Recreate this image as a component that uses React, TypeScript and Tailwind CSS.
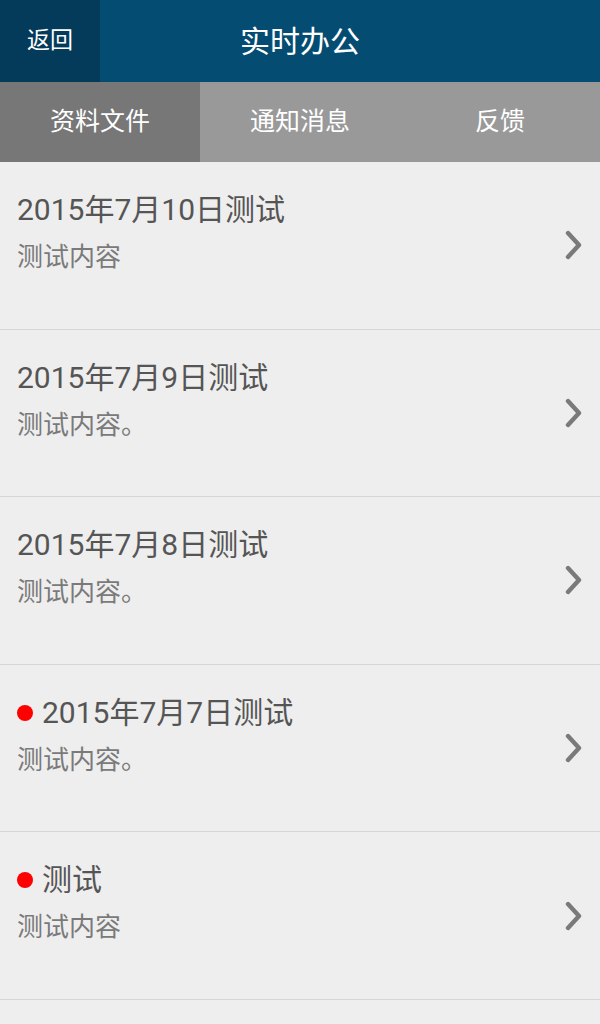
import { ReactNode } from 'react'

interface Notice {
  title: string
  body: string
  unread?: boolean
}

const notices: Notice[] = [
  { title: '2015年7月10日测试', body: '测试内容' },
  { title: '2015年7月9日测试', body: '测试内容。' },
  { title: '2015年7月8日测试', body: '测试内容。' },
  { title: '2015年7月7日测试', body: '测试内容。', unread: true },
  { title: '测试', body: '测试内容', unread: true },
]

const tabs = ['资料文件', '通知消息', '反馈']

function Chevron() {
  return (
    <svg width="20" height="30" viewBox="0 0 20 30" className="shrink-0">
      <path d="M4 3 L15 15 L4 27" fill="none" stroke="#7a7a7a" strokeWidth="4.4" strokeLinecap="round" strokeLinejoin="round" />
    </svg>
  )
}

function Row({ notice }: { notice: Notice }): ReactNode {
  return (
    <div className="h-[167.6px] border-b border-[#d6d6d6] flex items-center pl-[17px] pr-[16px]">
      <div className="flex-1 flex flex-col self-stretch pt-[31px]">
        <div className="flex items-center h-[34px] text-[30px] leading-[34px] text-[#555555]">
          {notice.unread && <span className="w-4 h-4 rounded-full bg-[#ff0000] mr-[9px] shrink-0" />}
          <span>{notice.title}</span>
        </div>
        <div className="mt-[15px] text-[26px] leading-[30px] text-[#7a7a7a]">{notice.body}</div>
      </div>
      <Chevron />
    </div>
  )
}

export default function App() {
  return (
    <div
      className="w-[600px] h-[1024px] overflow-hidden bg-[#eeeeee]"
      style={{ fontFamily: 'Roboto, "Noto Sans CJK SC", sans-serif' }}
    >
      {/* Title bar */}
      <div className="relative h-[82px] bg-[#054c72] flex items-center justify-center">
        <div className="absolute left-0 top-0 h-full w-[100px] bg-[#043a5a] flex items-center justify-center text-white text-[23px]">
          返回
        </div>
        <h1 className="text-white text-[30px] font-normal m-0">实时办公</h1>
      </div>

      {/* Tabs */}
      <div className="flex h-[80px] bg-[#999999]">
        {tabs.map((tab, i) => (
          <div
            key={tab}
            className={`flex-1 flex items-center justify-center text-white text-[25px] ${i === 0 ? 'bg-[#777777]' : ''}`}
          >
            {tab}
          </div>
        ))}
      </div>

      {/* List */}
      <div className="flex flex-col">
        {notices.map((n) => (
          <Row key={n.title + n.body} notice={n} />
        ))}
      </div>
    </div>
  )
}
